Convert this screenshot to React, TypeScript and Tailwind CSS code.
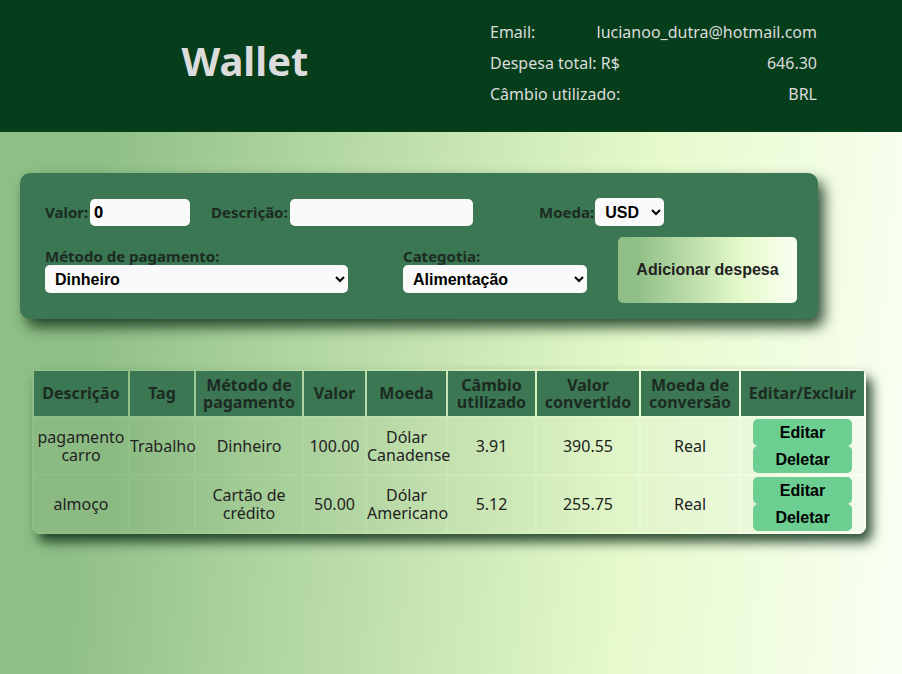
import React from "react";

const pageBg = "bg-[linear-gradient(95deg,#8fbf86_12%,#e6facc_70%,#fafff3_100%)]";
const softBg = "bg-[linear-gradient(90deg,#8fbf86_10%,#e6facc_70%,#fafff3_100%)]";

type Expense = {
  description: string;
  tag: string;
  method: string;
  value: string;
  currency: string;
  rate: string;
  converted: string;
};

const expenses: Expense[] = [
  { description: "pagamento carro", tag: "Trabalho", method: "Dinheiro", value: "100.00", currency: "Dólar Canadense", rate: "3.91", converted: "390.55" },
  { description: "almoço", tag: "", method: "Cartão de crédito", value: "50.00", currency: "Dólar Americano", rate: "5.12", converted: "255.75" },
];

const headers = [
  { label: "Descrição", w: "w-[94px]" },
  { label: "Tag", w: "w-[64px]" },
  { label: "Método de pagamento", w: "w-[106px]" },
  { label: "Valor", w: "w-[61px]" },
  { label: "Moeda", w: "w-[79px]" },
  { label: "Câmbio utilizado", w: "w-[87px]" },
  { label: "Valor convertido", w: "w-[102px]" },
  { label: "Moeda de conversão", w: "w-[98px]" },
  { label: "Editar/Excluir", w: "w-[123px]" },
];

const headerInfo = [
  ["Email:", "lucianoo_dutra@hotmail.com"],
  ["Despesa total: R$", "646.30"],
  ["Câmbio utilizado:", "BRL"],
];

function Header() {
  return (
    <header className="flex h-[132px] bg-[#063e1b] text-[#dcdcdc]">
      <div className="flex w-[490px] shrink-0 justify-center pt-[37px]">
        <h1 className="text-[40px] font-bold leading-[48px]">Wallet</h1>
      </div>
      <div className="flex w-[327px] shrink-0 flex-col pt-[16px] text-[16px]">
        {headerInfo.map(([label, value]) => (
          <div key={label} className="flex h-[31px] items-center justify-between whitespace-nowrap">
            <span>{label}</span>
            <span>{value}</span>
          </div>
        ))}
      </div>
    </header>
  );
}

function ExpenseForm() {
  const field = "h-[27px] shrink-0 rounded-[5px] bg-[#fafafa] px-[4px] text-[16px] font-bold text-black outline-none";
  const select = "h-[28px] shrink-0 rounded-[5px] bg-[#fafafa] px-[6px] text-[16px] font-bold text-black font-['Liberation_Sans',Arial,sans-serif]";
  return (
    <form className="h-[146px] w-[798px] rounded-[10px] bg-[#3b7753] pl-[25px] pt-[25px] text-[15px] font-bold text-[#1c2b22] shadow-[6px_8px_14px_rgba(14,48,24,0.85)]">
      <div className="flex h-[28px] items-center">
        <label className="flex w-[145px] shrink-0 items-center justify-between">
          Valor:
          <input className={`${field} w-[100px]`} defaultValue="0" />
        </label>
        <label className="ml-[21px] flex w-[262px] shrink-0 items-center justify-between">
          Descrição:
          <input className={`${field} w-[183px]`} />
        </label>
        <label className="ml-[66px] flex shrink-0 items-center gap-[1px]">
          Moeda:
          <select className={`${select} w-[69px]`} defaultValue="USD">
            <option>USD</option>
          </select>
        </label>
      </div>
      <div className="mt-[11px] flex h-[66px] items-center">
        <label className="flex w-[303px] shrink-0 flex-col leading-[18px]">
          Método de pagamento:
          <select className={`${select} w-full`}>
            <option>Dinheiro</option>
          </select>
        </label>
        <label className="ml-[55px] flex w-[184px] shrink-0 flex-col leading-[18px]">
          Categotia:
          <select className={`${select} w-full`}>
            <option>Alimentação</option>
          </select>
        </label>
        <button
          type="button"
          className={`ml-[31px] h-[66px] w-[179px] shrink-0 rounded-[5px] ${softBg} font-['Liberation_Sans',Arial,sans-serif] text-[16px] font-bold text-[#222]`}
        >
          Adicionar despesa
        </button>
      </div>
    </form>
  );
}

function ExpenseTable() {
  const cell = "h-[56px] bg-[rgba(0,40,0,0.025)] p-0 text-center align-middle leading-[18px]";
  const btn = "h-[27px] w-[99px] rounded-[5px] bg-[#6dce91] font-['Liberation_Sans',Arial,sans-serif] text-[16px] font-bold text-black";
  return (
    <div className={`mt-[50px] ml-[12px] w-[834px] overflow-hidden rounded-[8px] ${softBg} shadow-[6px_8px_12px_rgba(14,48,24,0.85)]`}>
      <table className="w-full table-fixed border-separate border-spacing-[2px] text-[16px] text-[#222]">
        <thead>
          <tr>
            {headers.map((h) => (
              <th key={h.label} className={`${h.w} h-[45px] bg-[#3b7753] p-0 text-center text-[16px] font-bold leading-[17px] text-[#1c2b22]`}>
                {h.label}
              </th>
            ))}
          </tr>
        </thead>
        <tbody>
          {expenses.map((e) => (
            <tr key={e.description}>
              <td className={cell}>{e.description}</td>
              <td className={cell}>{e.tag}</td>
              <td className={cell}>{e.method}</td>
              <td className={cell}>{e.value}</td>
              <td className={cell}>{e.currency}</td>
              <td className={cell}>{e.rate}</td>
              <td className={cell}>{e.converted}</td>
              <td className={cell}>Real</td>
              <td className={cell}>
                <div className="flex flex-col items-center">
                  <button type="button" className={btn}>Editar</button>
                  <button type="button" className={btn}>Deletar</button>
                </div>
              </td>
            </tr>
          ))}
        </tbody>
      </table>
    </div>
  );
}

export default function App() {
  return (
    <div className={`min-h-[674px] ${pageBg} font-['Noto_Sans',sans-serif]`}>
      <Header />
      <main className="px-[20px] pt-[41px] pb-[20px]">
        <ExpenseForm />
        <ExpenseTable />
      </main>
    </div>
  );
}
